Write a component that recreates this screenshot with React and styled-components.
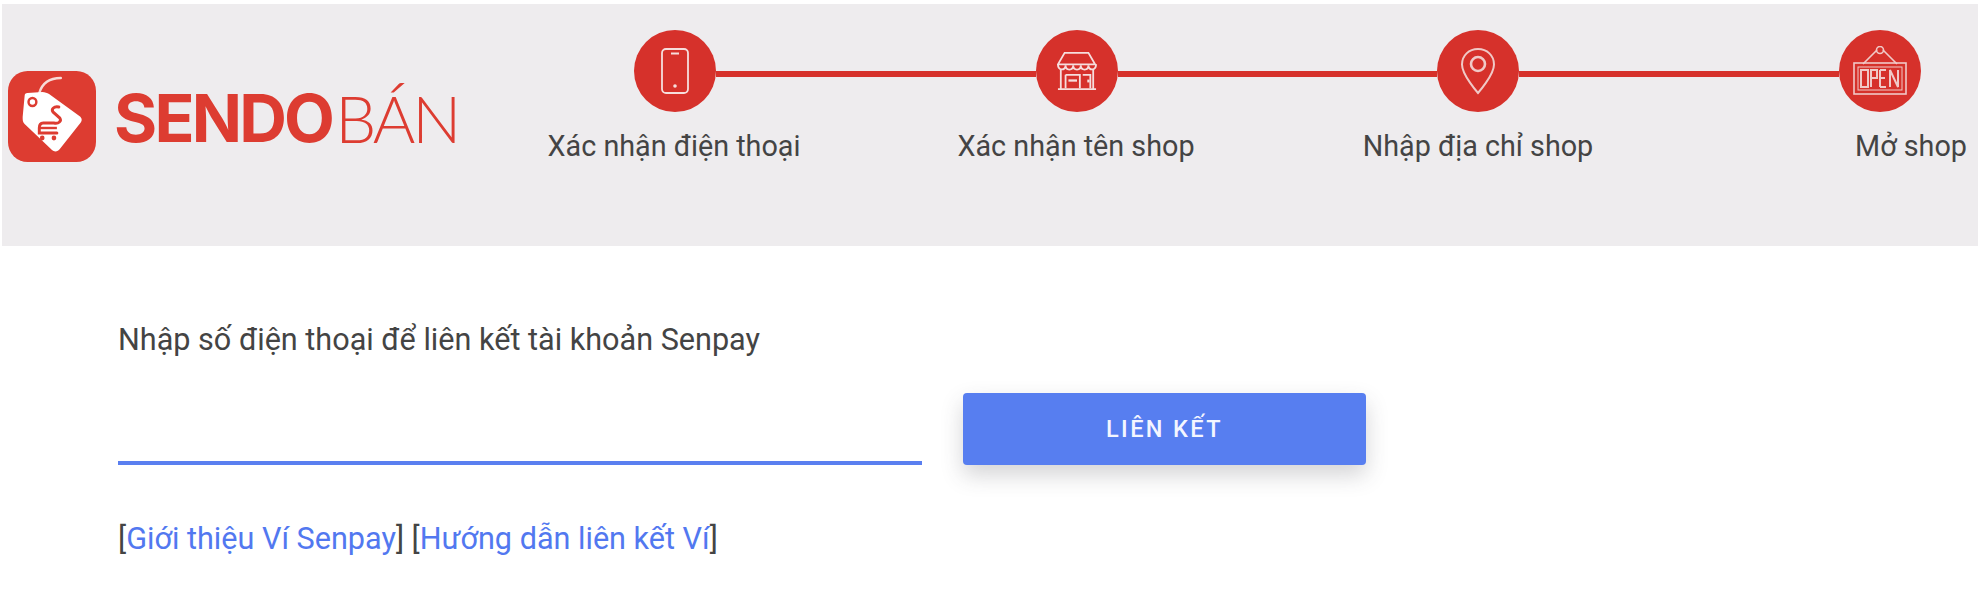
import { Fragment } from "react";
import styled, { createGlobalStyle } from "styled-components";

const GlobalStyle = createGlobalStyle`
  html, body {
    margin: 0;
    padding: 0;
    background: #ffffff;
    font-family: Roboto, "Noto Sans", sans-serif;
  }
`;

const Page = styled.div`
  width: 1978px;
  height: 604px;
  padding: 4px 0 0 2px;
  box-sizing: border-box;
  overflow: hidden;
`;

const Header = styled.header`
  display: flex;
  height: 242px;
  background: #eeecee;
`;

const Logo = styled.div`
  display: flex;
  flex: none;
  align-items: center;
  width: 471px;
  height: 91px;
  margin-top: 67px;
  padding-left: 6px;
  box-sizing: border-box;
  color: #dd3c31;
  white-space: nowrap;
`;

const LogoSvg = styled.svg`
  flex: none;
`;

const LogoWord = styled.span`
  margin: 4px 0 0 18px;
  font-family: Inter, "Liberation Sans", sans-serif;
  font-size: 66px;
  font-weight: 700;
  letter-spacing: -2.8px;
  line-height: 91px;
`;

const LogoThin = styled.span`
  margin: 4px 0 0 3px;
  font-family: Lato, sans-serif;
  font-size: 65px;
  font-weight: 300;
  letter-spacing: -3px;
  line-height: 91px;
`;

const Stepper = styled.div`
  display: flex;
  flex-direction: column;
  width: 1505px;
`;

const Rail = styled.div`
  display: flex;
  align-items: center;
  width: 1287px;
  margin: 26px 0 0 161px;
`;

const Circle = styled.div`
  display: flex;
  align-items: center;
  justify-content: center;
  flex: none;
  width: 82px;
  height: 82px;
  border-radius: 50%;
  background: #d6312b;
`;

const Connector = styled.div`
  flex: 1;
  height: 6px;
  margin-top: 6px;
  background: #d6312b;
`;

const Labels = styled.div`
  display: grid;
  grid-template-columns: repeat(4, 402px);
  margin-top: 17px;
`;

const StepLabel = styled.div`
  padding-left: ${(p) => p.$shift || 0}px;
  color: #444444;
  font-size: 28.75px;
  line-height: 34px;
  text-align: center;
  white-space: nowrap;
`;

const Content = styled.main`
  padding: 76px 0 0 116px;
`;

const Prompt = styled.p`
  margin: 0;
  color: #444444;
  font-size: 30.6px;
  line-height: 36px;
`;

const FormRow = styled.div`
  display: flex;
  align-items: flex-end;
  gap: 41px;
  margin-top: 35px;
`;

const PhoneInput = styled.input`
  width: 804px;
  height: 72px;
  padding: 0;
  border: 0;
  border-bottom: 4px solid #5a7ff0;
  box-sizing: border-box;
  outline: none;
  background: transparent;
  font-family: inherit;
  font-size: 30px;
`;

const LinkButton = styled.button`
  width: 403px;
  height: 72px;
  border: 0;
  border-radius: 4px;
  background: #577ef0;
  box-shadow: 0 10px 22px rgba(60, 60, 70, 0.22);
  color: #f4f6ff;
  font-family: inherit;
  font-size: 23.5px;
  font-weight: 500;
  letter-spacing: 2.4px;
`;

const HelpLine = styled.p`
  margin: 56px 0 0;
  color: #444444;
  font-size: 30.6px;
  line-height: 36px;
`;

const HelpLink = styled.a`
  color: #5278f0;
  text-decoration: none;
`;

const TagMark = () => (
  <LogoSvg width="88" height="91" viewBox="0 0 90 91" preserveAspectRatio="none">
    <rect width="90" height="91" rx="20" fill="#dd3c31" />
    <path d="M32 22C35 12 42 7 54 7" fill="none" stroke="#f7dcd8" strokeWidth="2.5" strokeLinecap="round" />
    <path d="M20 22L35 21C38 21 40 22 42 23L73 45C76 47 76 50 74 52L53 78C51 81 47 81 45 79L17 53C15 51 15 49 15 46L17 25C17 23 18 22 20 22Z" fill="#ffffff" />
    <circle cx="25" cy="31" r="4" fill="none" stroke="#dd3c31" strokeWidth="2.5" />
    <path d="M52 36C47 35 44 38 46 41L53 47C55 50 52 53 47 52H36C33 52 32 54 32 57V62H50" fill="none" stroke="#dd3c31" strokeWidth="3" strokeLinecap="round" />
    <path d="M32 57H50" fill="none" stroke="#dd3c31" strokeWidth="2.4" />
    <circle cx="35" cy="67" r="2.4" fill="#dd3c31" />
    <circle cx="47" cy="67" r="2.4" fill="#dd3c31" />
  </LogoSvg>
);

const PhoneIcon = () => (
  <svg width="30" height="48" viewBox="0 0 30 48" fill="none" stroke="#f6dedd" strokeWidth="1.8">
    <rect x="2" y="2" width="26" height="44" rx="4" />
    <path d="M11 6.5H19" strokeWidth="2" />
    <circle cx="15" cy="39" r="1.8" fill="#f6dedd" stroke="none" />
  </svg>
);

const StoreIcon = () => (
  <svg width="40" height="40" viewBox="0 0 42 42" fill="none" stroke="#f6dedd" strokeWidth="1.9">
    <path d="M8 2H33L40 14H1Z" />
    <path d="M1 14C1 21 9 21 9 15C9 21 17 21 17 15C17 21 25 21 25 15C25 21 33 21 33 15C33 21 41 21 41 14" />
    <path d="M4 19V39M38 19V39M1 40H41" />
    <path d="M9 25H24V39M9 25V39" />
    <path d="M12 31H21" strokeWidth="2.4" />
    <path d="M27 25H35V39" />
    <path d="M33 30V33" strokeWidth="2.4" />
  </svg>
);

const PinIcon = () => (
  <svg width="36" height="48" viewBox="0 0 36 48" fill="none" stroke="#f0c9c7" strokeWidth="2">
    <path d="M18 46C18 46 2 28 2 17.5C2 8.5 9 2 18 2C27 2 34 8.5 34 17.5C34 28 18 46 18 46Z" />
    <circle cx="18" cy="17" r="7" strokeWidth="2.6" />
  </svg>
);

const OpenIcon = () => (
  <svg width="56" height="50" viewBox="0 0 56 50" fill="none" stroke="#f0c9c7" strokeWidth="1.6">
    <path d="M11 18L25 4M45 18L31 4" />
    <circle cx="28" cy="4" r="3.5" />
    <rect x="2" y="17" width="52" height="31" />
    <rect x="6" y="21" width="44" height="23" strokeWidth="1" />
    <rect x="9" y="24" width="7" height="17" strokeWidth="2" />
    <path d="M19 41V24H25V32H19M28 24H34M28 32H33M28 41H34M28 24V41M38 41V24L46 41V24" strokeWidth="2" />
  </svg>
);

const steps = [
  { label: "Xác nhận điện thoại", icon: <PhoneIcon /> },
  { label: "Xác nhận tên shop", icon: <StoreIcon /> },
  { label: "Nhập địa chỉ shop", icon: <PinIcon /> },
  { label: "Mở shop", icon: <OpenIcon />, shift: 62 },
];

const App = () => {
  return (
    <Page>
      <GlobalStyle />
      <Header>
        <Logo>
          <TagMark />
          <LogoWord>SENDO</LogoWord>
          <LogoThin>BÁN</LogoThin>
        </Logo>
        <Stepper>
          <Rail>
            {steps.map((step, i) => (
              <Fragment key={step.label}>
                {i > 0 && <Connector />}
                <Circle>{step.icon}</Circle>
              </Fragment>
            ))}
          </Rail>
          <Labels>
            {steps.map((step) => (
              <StepLabel key={step.label} $shift={step.shift}>
                {step.label}
              </StepLabel>
            ))}
          </Labels>
        </Stepper>
      </Header>
      <Content>
        <Prompt>Nhập số điện thoại để liên kết tài khoản Senpay</Prompt>
        <FormRow>
          <PhoneInput type="text" />
          <LinkButton>LIÊN KẾT</LinkButton>
        </FormRow>
        <HelpLine>
          [<HelpLink href="#">Giới thiệu Ví Senpay</HelpLink>] [
          <HelpLink href="#">Hướng dẫn liên kết Ví</HelpLink>]
        </HelpLine>
      </Content>
    </Page>
  );
};

export default App;
